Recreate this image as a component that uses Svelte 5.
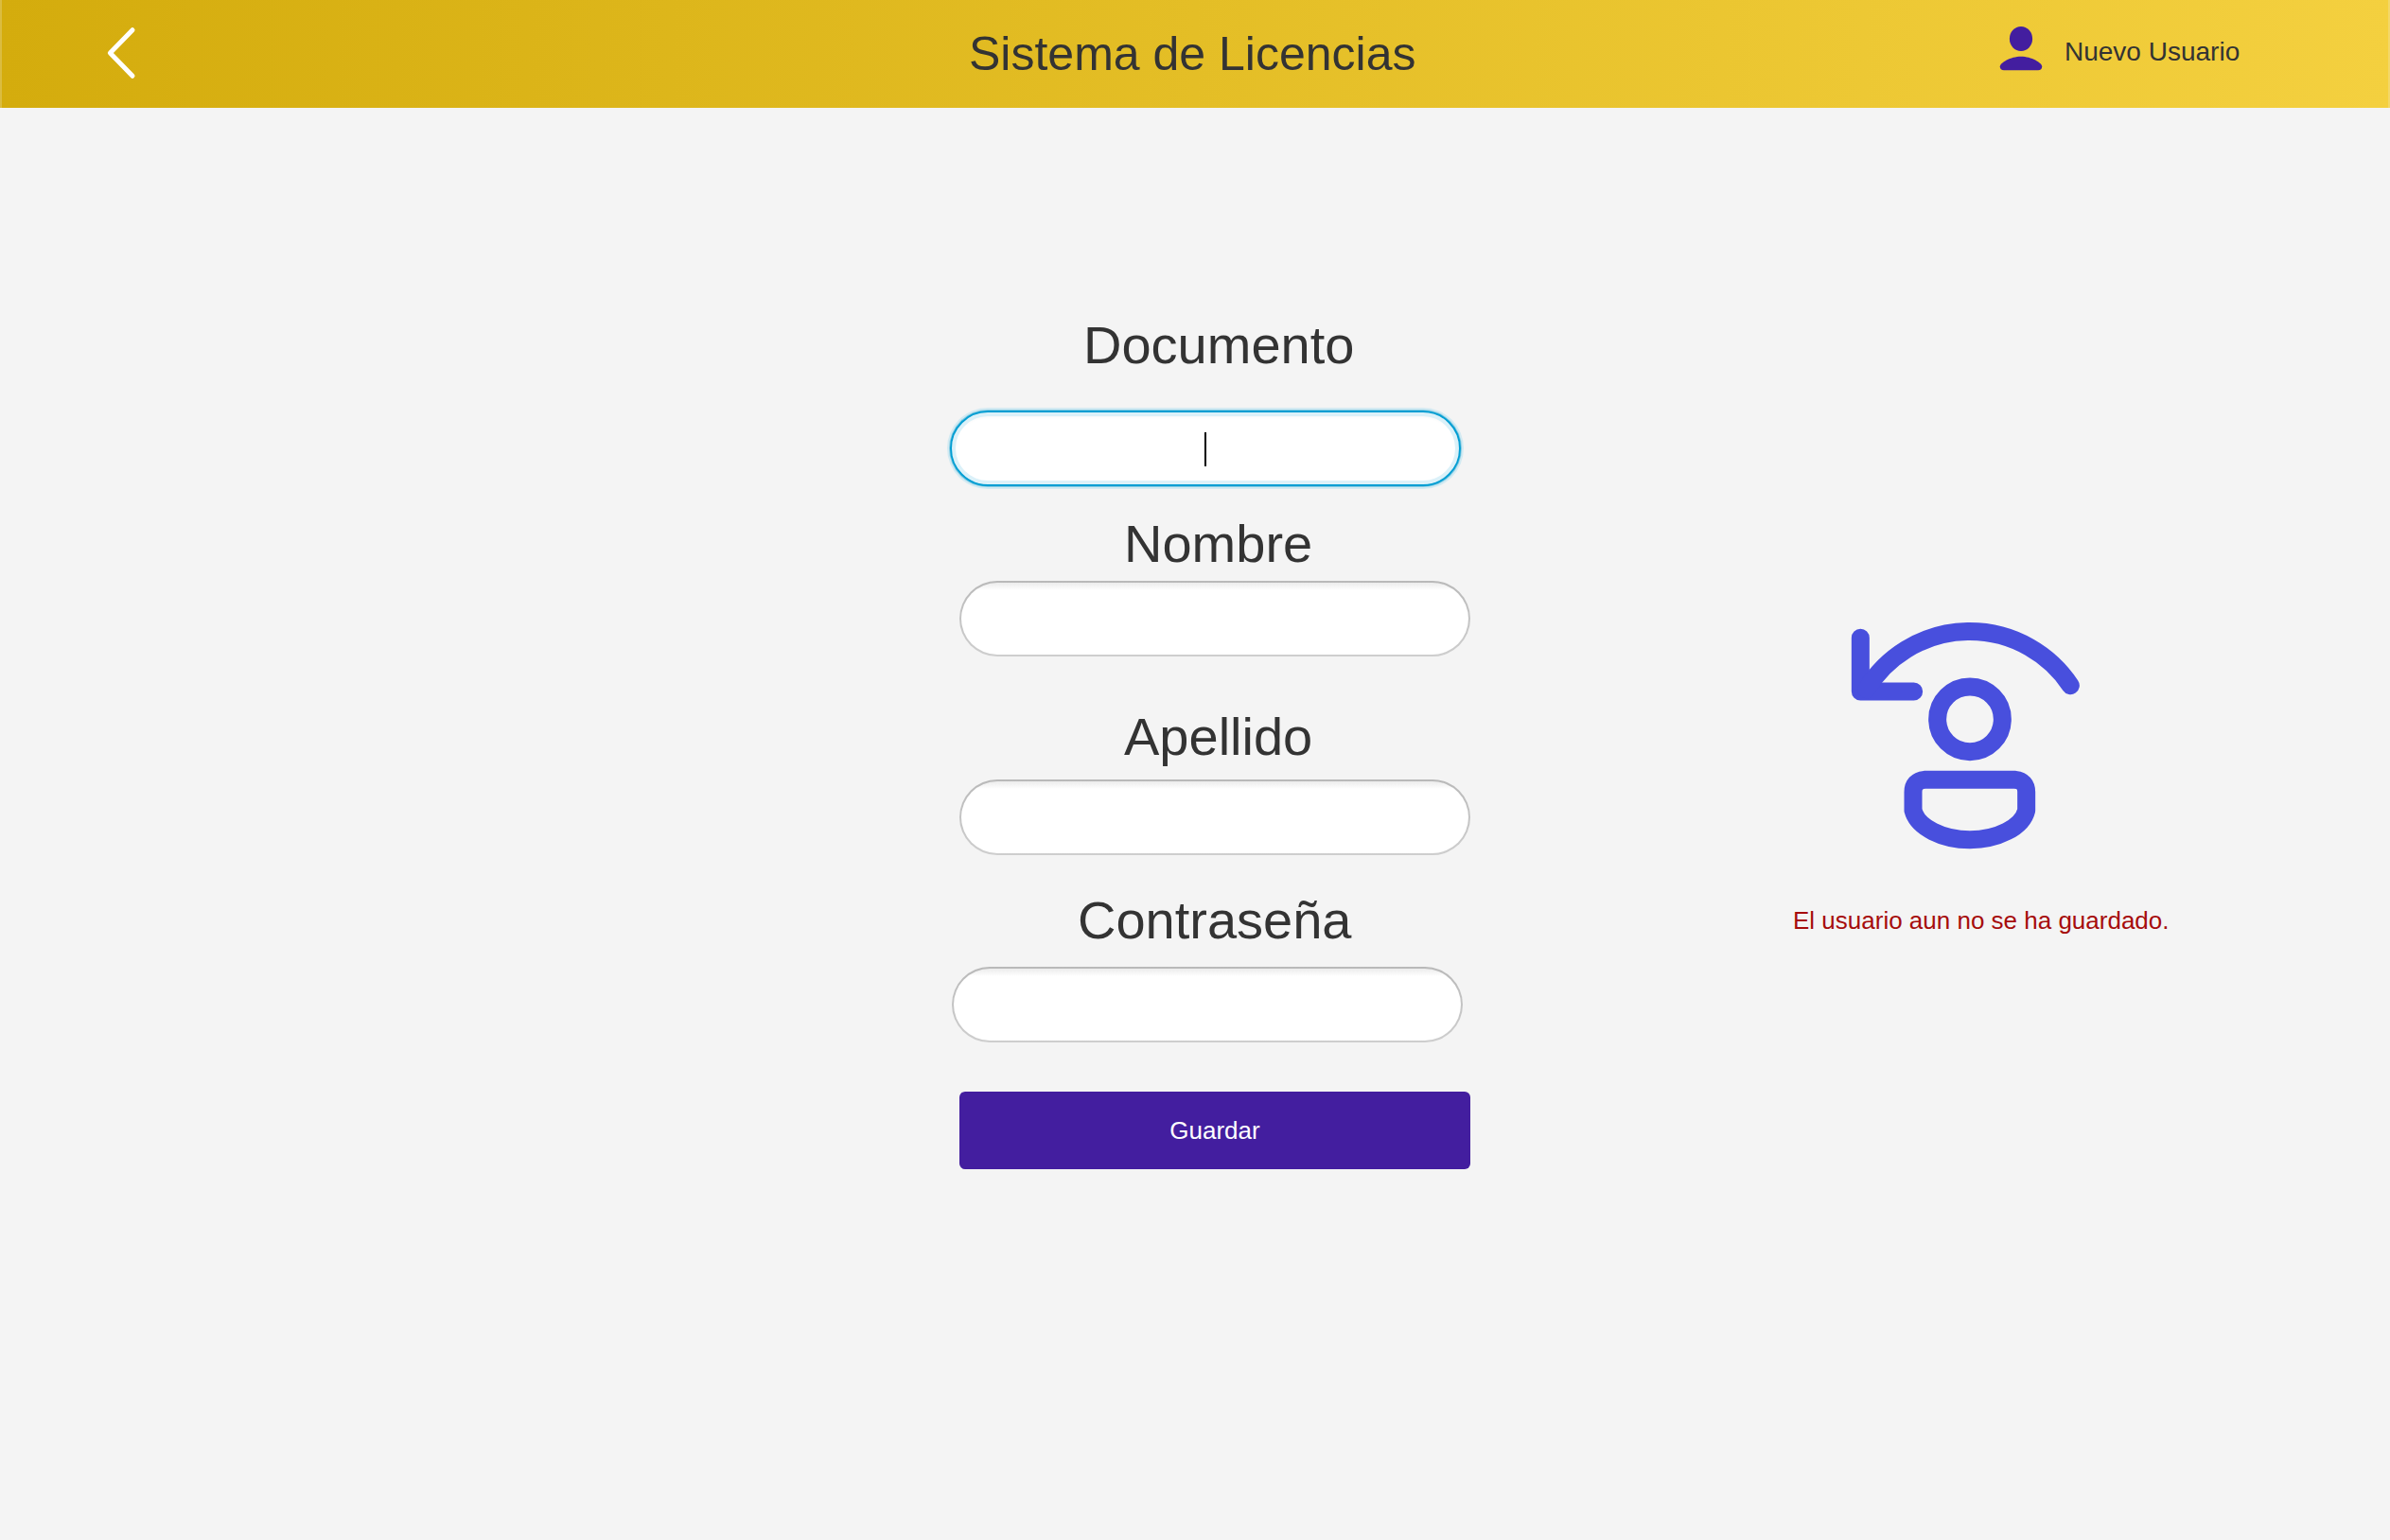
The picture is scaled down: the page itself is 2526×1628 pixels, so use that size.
<script lang="ts">
  const fields = [
    { id: 'documento', label: 'Documento', focused: true },
    { id: 'nombre', label: 'Nombre', focused: false },
    { id: 'apellido', label: 'Apellido', focused: false },
    { id: 'contrasena', label: 'Contraseña', focused: false },
  ];
</script>

<div class="page">
  <header>
    <button class="back" aria-label="Volver">
      <svg width="32" height="58" viewBox="0 0 32 58">
        <path d="M28 4.7 4.4 29 28 53.3" />
      </svg>
    </button>
    <h1>Sistema de Licencias</h1>
    <div class="user">
      <svg width="46" height="48" viewBox="0 0 46 48">
        <ellipse cx="23" cy="13" rx="12.1" ry="13" />
        <path d="M5 46.3Q.8 46.3.8 42.2C.8 38.6 12 31.8 23 31.8S45.2 38.6 45.2 42.2Q45.2 46.3 41 46.3Z" />
      </svg>
      <span>Nuevo Usuario</span>
    </div>
  </header>

  <main>
    <form>
      {#each fields as field}
        <div class="field {field.id}">
          <span class="label">{field.label}</span>
          <div class="input" class:focused={field.focused}>
            {#if field.focused}<span class="caret"></span>{/if}
          </div>
        </div>
      {/each}
      <button class="save" type="button">Guardar</button>
    </form>

    <aside>
      <svg width="290" height="270" viewBox="0 0 870 810">
        <path d="M109 103V273H278" />
        <path d="M128 266A384 384 0 0 1 775 254" />
        <circle cx="456" cy="361" r="103" />
        <path d="M312 553H600Q635 557 635 592V650C622 704 543 743 456 743S290 704 276 650V592Q276 557 312 553Z" />
      </svg>
      <p>El usuario aun no se ha guardado.</p>
    </aside>
  </main>
</div>

<style>
  :global(body) {
    margin: 0;
    background: #f4f4f4;
  }
  .page {
    width: 2526px;
    height: 1628px;
    overflow: hidden;
    background: #f4f4f4;
    color: #333;
    font-family: 'Liberation Sans', Arial, sans-serif;
  }
  header {
    box-sizing: border-box;
    height: 114px;
    display: grid;
    grid-template-columns: 1024px 1088px 1fr;
    align-items: start;
    background: linear-gradient(to right, #d4ac0d, #f4d03f);
    box-shadow: inset 2px 0 rgba(244, 244, 244, 0.22), inset -2px 0 rgba(244, 244, 244, 0.22);
  }
  button {
    border: 0;
    padding: 0;
    font-family: inherit;
  }
  svg {
    display: block;
  }
  .back {
    margin: 27px 0 0 112px;
    justify-self: start;
    background: none;
  }
  .back path {
    fill: none;
    stroke: #fff;
    stroke-width: 5;
    stroke-linecap: round;
    stroke-linejoin: round;
  }
  h1 {
    margin: 28px 0 0;
    font-size: 50px;
    line-height: 58px;
    font-weight: 400;
    white-space: nowrap;
  }
  .user {
    display: flex;
    gap: 23px;
    margin: 28px 0 0 1px;
    font-size: 28px;
    line-height: 34px;
    white-space: nowrap;
  }
  .user svg {
    fill: #431e9f;
  }
  .user span {
    margin-top: 10px;
  }
  main {
    display: grid;
    grid-template-columns: 540px 1fr;
    column-gap: 376px;
    padding-left: 1014px;
    align-items: start;
  }
  form {
    padding-top: 218px;
  }
  .field {
    display: flex;
    flex-direction: column;
  }
  .label {
    font-size: 56px;
    line-height: 66px;
    height: 64px;
  }
  .input {
    box-sizing: border-box;
    width: 540px;
    height: 80px;
    border: 2px solid transparent;
    border-radius: 40px;
    background:
      linear-gradient(#ececec, #fff 8px) padding-box,
      linear-gradient(#b9b9b9, #cecece) border-box;
    display: flex;
    align-items: center;
    justify-content: center;
  }
  .input.focused {
    border-color: #039ed3;
    background: #fff;
    box-shadow: 0 0 0 1px #86cbe2, 0 0 0 3px #d3eaf2, inset 0 0 0 4px #dbf1f9, inset 0 6px 3px -1px #f8f8f8;
  }
  .caret {
    width: 2px;
    height: 36px;
    margin-top: 2px;
    background: #000;
  }
  .documento .label { margin: 0 0 38px 131px; }
  .documento .input { margin-left: -10px; }
  .nombre { margin-top: 28px; }
  .nombre .label { margin: 0 0 8px 174px; }
  .apellido { margin-top: 52px; }
  .apellido .label { margin: 0 0 14px 174px; }
  .contrasena { margin-top: 36px; }
  .contrasena .label { margin: 0 0 18px 125px; }
  .contrasena .input { margin-left: -8px; }
  .save {
    display: block;
    width: 540px;
    height: 82px;
    margin-top: 52px;
    border-radius: 6px;
    background: #431e9f;
    color: #fff;
    font-size: 26px;
    line-height: 30px;
  }
  aside {
    padding-top: 526px;
  }
  aside svg {
    fill: none;
    stroke: #484fdd;
    stroke-width: 57;
    stroke-linecap: round;
    stroke-linejoin: round;
  }
  p {
    margin: 48px 0 0 -35px;
    color: #a60c0c;
    font-size: 26px;
    line-height: 30px;
    white-space: nowrap;
  }
</style>
